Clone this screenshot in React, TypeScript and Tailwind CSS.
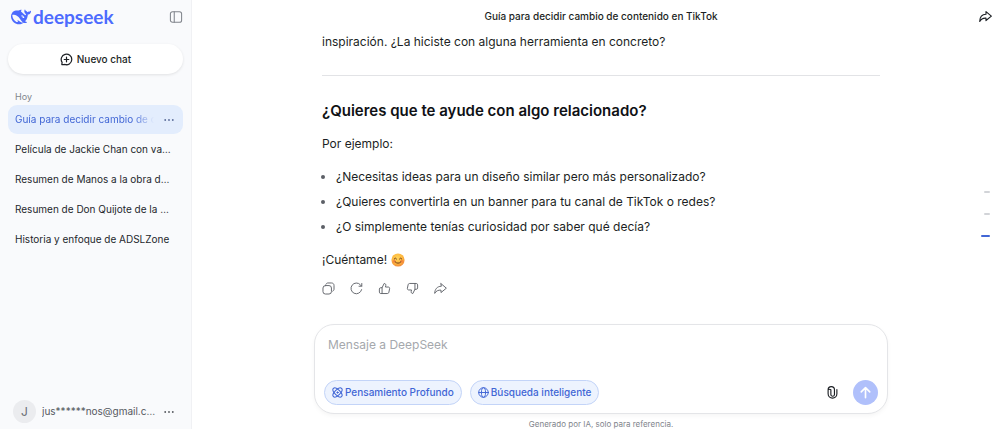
import type { ReactNode } from "react";

const chats = [
  "Película de Jackie Chan con varios hermanos",
  "Resumen de Manos a la obra de Daft Punk",
  "Resumen de Don Quijote de la Mancha",
  "Historia y enfoque de ADSLZone",
];

const suggestions = [
  "¿Necesitas ideas para un diseño similar pero más personalizado?",
  "¿Quieres convertirla en un banner para tu canal de TikTok o redes?",
  "¿O simplemente tenías curiosidad por saber qué decía?",
];

function Icon({ children, className }: { children: ReactNode; className: string }) {
  return (
    <svg
      viewBox="0 0 16 16"
      className={className}
      fill="none"
      stroke="currentColor"
      strokeWidth="1.2"
      strokeLinecap="round"
      strokeLinejoin="round"
      aria-hidden="true"
    >
      {children}
    </svg>
  );
}

function Whale() {
  return (
    <svg viewBox="0 0 24 24" className="size-5 shrink-0" fill="currentColor" aria-hidden="true">
      <path d="M23.748 4.482c-.254-.124-.364.113-.512.234-.051.039-.094.09-.137.136-.372.397-.806.657-1.373.626-.829-.046-1.537.214-2.163.848-.133-.782-.575-1.248-1.247-1.548-.352-.156-.708-.311-.955-.65-.172-.241-.219-.51-.305-.774-.055-.16-.11-.323-.293-.35-.2-.031-.278.136-.356.276-.313.572-.434 1.202-.422 1.84.027 1.436.633 2.58 1.838 3.393.137.093.172.187.129.323-.082.28-.18.552-.266.833-.055.179-.137.217-.329.14a5.526 5.526 0 01-1.736-1.18c-.857-.828-1.631-1.742-2.597-2.458a11.365 11.365 0 00-.689-.471c-.985-.957.13-1.743.388-1.836.27-.098.093-.432-.779-.428-.872.004-1.67.295-2.687.684a3.055 3.055 0 01-.465.137 9.597 9.597 0 00-2.883-.102c-1.885.21-3.39 1.102-4.497 2.623C.082 8.606-.231 10.684.152 12.85c.403 2.284 1.569 4.175 3.36 5.653 1.858 1.533 3.997 2.284 6.438 2.14 1.482-.085 3.133-.284 4.994-1.86.47.234.962.327 1.78.397.63.059 1.236-.03 1.705-.128.735-.156.684-.837.419-.961-2.155-1.004-1.682-.595-2.113-.926 1.096-1.296 2.746-2.642 3.392-7.003.05-.347.007-.565 0-.845-.004-.17.035-.237.23-.256a4.173 4.173 0 001.545-.475c1.396-.763 1.96-2.015 2.093-3.517.02-.23-.004-.467-.247-.588zM11.581 18c-2.089-1.642-3.102-2.183-3.52-2.16-.392.024-.321.471-.235.763.09.288.207.486.371.739.114.167.192.416-.113.603-.673.416-1.842-.14-1.897-.167-1.361-.802-2.5-1.86-3.301-3.307-.774-1.393-1.224-2.887-1.298-4.482-.02-.386.093-.522.477-.592a4.696 4.696 0 011.529-.039c2.132.312 3.946 1.265 5.468 2.774.868.86 1.525 1.887 2.202 2.891.72 1.066 1.494 2.082 2.48 2.914.348.292.625.514.891.677-.802.09-2.14.11-3.054-.614zm1-6.44a.306.306 0 01.415-.287.302.302 0 01.2.288.306.306 0 01-.31.307.303.303 0 01-.304-.308zm3.11 1.596c-.2.081-.399.151-.59.16a1.245 1.245 0 01-.798-.254c-.274-.23-.47-.358-.552-.758a1.73 1.73 0 01.016-.588c.07-.327-.008-.537-.239-.727-.187-.156-.426-.199-.688-.199a.559.559 0 01-.254-.078c-.11-.054-.2-.19-.114-.358.028-.054.16-.186.192-.21.356-.202.767-.136 1.146.016.352.144.618.408 1.001.782.391.451.462.576.685.914.176.265.336.537.445.848.067.195-.019.354-.25.452z" />
    </svg>
  );
}

function Dots() {
  return (
    <svg viewBox="0 0 10 10" className="size-[10px]" fill="currentColor" aria-hidden="true">
      <circle cx="1.2" cy="5" r="0.9" />
      <circle cx="5" cy="5" r="0.9" />
      <circle cx="8.8" cy="5" r="0.9" />
    </svg>
  );
}

const sharePath = "M8.6 2 15.2 7.6 8.6 13V10C5.4 9.8 2.6 10.8 0.9 14 1 8.8 3.8 5.4 8.6 5.2Z";
const thumbPath =
  "M5 7 7.6 1.8C9 1.8 9.8 2.8 9.6 4.2L9.2 6.2H12.6C13.8 6.2 14.5 7.1 14.3 8.2L13.4 12.6C13.2 13.6 12.5 14.2 11.5 14.2H3.4C2.4 14.2 1.7 13.5 1.7 12.5V8.7C1.7 7.7 2.4 7 3.4 7H5V14";

function Smile() {
  return (
    <svg viewBox="0 0 16 16" className="size-[14px]" role="img" aria-label="Cara sonriente">
      <defs>
        <radialGradient id="face" cx="45%" cy="35%" r="65%">
          <stop offset="0" stopColor="#ffd45a" />
          <stop offset="0.65" stopColor="#fdb53c" />
          <stop offset="1" stopColor="#f08a3a" />
        </radialGradient>
      </defs>
      <circle cx="8" cy="8" r="7.5" fill="url(#face)" />
      <circle cx="3.6" cy="9.4" r="1.8" fill="#f4703f" opacity="0.6" />
      <circle cx="12.4" cy="9.4" r="1.8" fill="#f4703f" opacity="0.6" />
      <path
        d="M3.6 6.8Q5 4.6 6.4 6.8M9.6 6.8Q11 4.6 12.4 6.8M4.6 10Q8 13.6 11.4 10"
        fill="none"
        stroke="#6b3a1c"
        strokeWidth="1.1"
        strokeLinecap="round"
      />
    </svg>
  );
}

function Sidebar() {
  return (
    <aside className="flex w-48 shrink-0 flex-col border-r border-[#f0f1f4] bg-[#f9fafc] px-2">
      <div className="flex h-[33px] items-center pl-[3px] text-[#4d6bfe]">
        <Whale />
        <span className="ml-[2px] flex-1 font-[Lato,sans-serif] text-[19px] leading-6 font-bold">deepseek</span>
        <button type="button" aria-label="Contraer barra lateral" className="text-[#81858c]">
          <Icon className="size-[14px]">
            <rect x="1.6" y="2" width="12.8" height="12" rx="2.4" />
            <path d="M6 2V14" />
          </Icon>
        </button>
      </div>

      <button
        type="button"
        className="mt-[11px] flex h-[30px] items-center justify-center gap-1 rounded-full bg-white text-[10px] font-medium text-[#1c1f24] shadow-[0_1px_3px_rgba(0,0,0,0.10)]"
      >
        <Icon className="size-[13px]">
          <path d="M2.6 11.6A6.5 6.5 0 1 1 5.6 14M2.6 11.6 2.2 14.2H8M8 5.2V10.8M5.2 8H10.8" strokeWidth="1.5" />
        </Icon>
        Nuevo chat
      </button>

      <h2 className="mt-[15px] px-[7px] text-[9px] leading-4 text-[#81858c]">Hoy</h2>
      <nav aria-label="Chats" className="flex flex-col text-[10px] text-[#24272c]">
        <div className="flex h-[29px] items-center rounded-[9px] bg-[#e3edfd] pr-[9px] pl-[7px] text-[#4166d5]">
          <a
            href="#guia"
            className="min-w-0 flex-1 overflow-hidden whitespace-nowrap [mask-image:linear-gradient(to_right,black_85%,transparent)]"
          >
            Guía para decidir cambio de contenido
          </a>
          <button type="button" aria-label="Opciones del chat" className="ml-[10px] text-[#5a6b98]">
            <Dots />
          </button>
        </div>
        {chats.map((chat) => (
          <a key={chat} href="#chat" className="mt-[1px] truncate pr-[11px] pl-[7px] leading-[29px]">
            {chat}
          </a>
        ))}
      </nav>

      <div className="mt-auto mb-[6px] flex items-center gap-[6px] pr-[9px] pl-[5px] text-[10px] text-[#55585e]">
        <span className="flex size-[23px] shrink-0 items-center justify-center rounded-full bg-[#ebecef] text-[12px] text-[#6a6d73]">
          J
        </span>
        <span className="min-w-0 flex-1 truncate">jus******nos@gmail.com.es</span>
        <button type="button" aria-label="Opciones de la cuenta">
          <Dots />
        </button>
      </div>
    </aside>
  );
}

function Actions() {
  return (
    <div className="mt-3 flex gap-[15px] text-[#65686e]">
      <button type="button" aria-label="Copiar">
        <Icon className="size-[13px]">
          <rect x="1.2" y="4.4" width="10.4" height="10.4" rx="3" />
          <path d="M4.8 2.8C5.3 1.7 6.2 1.2 7.4 1.2H11.6C13.6 1.2 14.8 2.4 14.8 4.4V8.6C14.8 9.9 14.3 10.8 13.2 11.3" />
        </Icon>
      </button>
      <button type="button" aria-label="Regenerar">
        <Icon className="size-[13px]">
          <path d="M14.3 9.4A6.6 6.6 0 1 1 12.9 3.6L14.2 5M14.5 1.8V5.2H11.1" />
        </Icon>
      </button>
      <button type="button" aria-label="Me gusta">
        <Icon className="size-[13px]">
          <path d={thumbPath} />
        </Icon>
      </button>
      <button type="button" aria-label="No me gusta">
        <Icon className="size-[13px] rotate-180">
          <path d={thumbPath} />
        </Icon>
      </button>
      <button type="button" aria-label="Compartir respuesta">
        <Icon className="size-[13px]">
          <path d={sharePath} />
        </Icon>
      </button>
    </div>
  );
}

function Composer() {
  return (
    <form className="flex flex-col rounded-[20px] border border-[#e4e5e8] bg-white px-[9px] pt-3 pb-2 shadow-[0_2px_4px_rgba(0,0,0,0.04)]">
      <textarea
        aria-label="Mensaje"
        rows={2}
        placeholder="Mensaje a DeepSeek"
        className="block h-[43px] w-full resize-none bg-transparent px-1 text-[12px] leading-4 outline-none placeholder:text-[#a5a8ad]"
      />
      <div className="flex items-center gap-2 text-[10px] font-medium text-[#4166d5]">
        <button
          type="button"
          className="flex h-[25px] items-center gap-[2px] rounded-full border border-[#c3d4f8] bg-[#edf3fe] px-[7px]"
        >
          <Icon className="size-[11px]">
            <ellipse cx="8" cy="8" rx="8.4" ry="4" transform="rotate(45 8 8)" strokeWidth="1.5" />
            <ellipse cx="8" cy="8" rx="8.4" ry="4" transform="rotate(-45 8 8)" strokeWidth="1.5" />
            <circle cx="8" cy="8" r="1" fill="currentColor" />
          </Icon>
          Pensamiento Profundo
        </button>
        <button
          type="button"
          className="flex h-[25px] items-center gap-[2px] rounded-full border border-[#c3d4f8] bg-[#edf3fe] px-[7px]"
        >
          <Icon className="size-[11px]">
            <circle cx="8" cy="8" r="7" strokeWidth="1.4" />
            <ellipse cx="8" cy="8" rx="3" ry="7" strokeWidth="1.4" />
            <path d="M1 8H15" strokeWidth="1.4" />
          </Icon>
          Búsqueda inteligente
        </button>
        <button type="button" aria-label="Adjuntar archivo" className="ml-auto mr-[6px] text-[#1c1f24]">
          <Icon className="size-[13px]">
            <path
              d="M10.4 5V10.4A2.2 2.2 0 0 1 6 10.4V4.6A3 3 0 0 0 2.6 4.6V9.6A5.4 5.4 0 0 0 13.4 9.6V4.4M2.6 4.6A3.9 3.9 0 0 1 10.4 4.6"
              strokeWidth="1.4"
            />
          </Icon>
        </button>
        <button
          type="submit"
          aria-label="Enviar"
          className="flex size-[25px] items-center justify-center rounded-full bg-[#b0c0fb] text-white"
        >
          <Icon className="size-[13px]">
            <path d="M8 14.4V2M2.8 7.2 8 2 13.2 7.2" strokeWidth="2" />
          </Icon>
        </button>
      </div>
    </form>
  );
}

export default function App() {
  return (
    <div className="flex h-screen overflow-hidden bg-white font-[Inter,sans-serif] text-[#1c1f24]">
      <Sidebar />
      <main className="relative flex min-w-0 flex-1 flex-col pl-[10px]">
        <header className="grid h-8 shrink-0 grid-cols-[1fr_auto_1fr] items-center">
          <h1 className="col-start-2 text-[10px] font-medium">Guía para decidir cambio de contenido en TikTok</h1>
          <button type="button" aria-label="Compartir" className="mr-2 justify-self-end">
            <Icon className="size-[13px]">
              <path d={sharePath} strokeWidth="1.4" />
            </Icon>
          </button>
        </header>

        <div className="mx-auto flex min-h-0 w-full max-w-[574px] flex-1 flex-col">
          <article className="min-h-0 flex-1 overflow-hidden px-2 text-[12px] leading-5">
            <p>inspiración. ¿La hiciste con alguna herramienta en concreto?</p>
            <hr className="mt-[23px] border-[#e2e3e6]" />
            <h2 className="mt-[25px] text-[15px] leading-5 font-semibold text-[#0f1115]">
              ¿Quieres que te ayude con algo relacionado?
            </h2>
            <p className="mt-[13px]">Por ejemplo:</p>
            <ul className="mt-[13px] flex list-disc flex-col gap-[5px] pl-[14px] marker:text-[#5c5f66]">
              {suggestions.map((text) => (
                <li key={text}>{text}</li>
              ))}
            </ul>
            <p className="mt-[13px] flex items-center gap-1">
              ¡Cuéntame! <Smile />
            </p>
            <Actions />
          </article>
          <Composer />
          <p className="pt-[5px] text-center text-[8px] leading-[10px] text-[#81858c]">
            Generado por IA, solo para referencia.
          </p>
        </div>

        <nav aria-label="Mensajes" className="absolute top-[191px] right-[10px] flex flex-col items-end gap-5">
          <a href="#m1" aria-label="Mensaje 1" className="h-[2px] w-[6px] rounded-full bg-[#d2d4d8]" />
          <a href="#m2" aria-label="Mensaje 2" className="h-[2px] w-[6px] rounded-full bg-[#d2d4d8]" />
          <a href="#m3" aria-label="Mensaje 3" className="h-[2px] w-[9px] rounded-full bg-[#4166d5]" />
        </nav>
      </main>
    </div>
  );
}
